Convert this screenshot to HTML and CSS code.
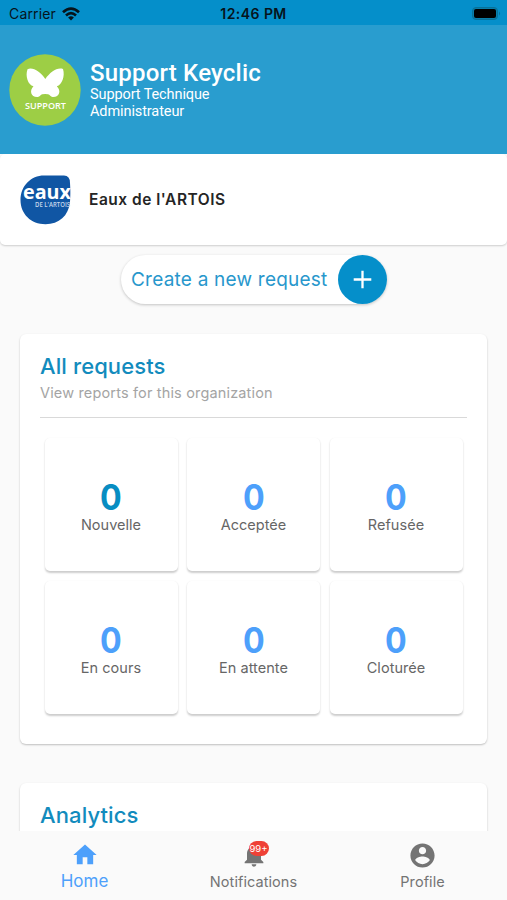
FILE: index.html
```html
<!DOCTYPE html>
<html lang="en">
<head>
<meta charset="utf-8">
<title>Keyclic</title>
<link rel="stylesheet" href="styles.css">
</head>
<body>
<div class="app">
  <div class="status">
    <div class="carrier"><span>Carrier</span>
      <svg width="18" height="14" viewBox="0 0 18 14"><g fill="none" stroke="#06141c" stroke-width="2.7"><path d="M1 5.2Q9-2 17 5.2"/><path d="M4 8.400Q9 4 14 8.400"/></g><path d="M6.100 10.400Q9 8 11.900 10.400L9 13.400Z" fill="#06141c"/></svg>
    </div>
    <span class="time">12:46 PM</span>
    <svg class="battery" width="31" height="15" viewBox="0 0 31 15"><rect x="1.500" y="1.500" width="25" height="12" rx="3.500" fill="#087eaa" stroke="#087199"/><rect x="3" y="3" width="22" height="9" rx="2" fill="#000"/><path d="M28 5.500q2.200 2 0 4z" fill="#087199"/></svg>
  </div>
  <header class="profile">
    <svg class="avatar" width="72" height="72" viewBox="0 0 72 72"><circle cx="36" cy="36" r="35.700" fill="#9dce45"/><path d="M18.500 15.200C24 12.800 31.500 18 36.300 25C41 18 48.500 12.800 54 15C56.200 22 53 31 47.800 32.200C52.500 36.500 50.500 43.500 43.500 43C41.500 42.800 41 40.700 39 40.300Q36 39.800 33.300 40.300C31.300 40.700 31 42.800 28.800 43C22 43.500 20 36.500 24.500 32.200C19 31 16 22 18.500 15.200Z" fill="#fff"/><text x="16" y="54.500" textLength="41" lengthAdjust="spacingAndGlyphs" class="avatar-text">SUPPORT</text></svg>
    <div>
      <h1>Support Keyclic</h1>
      <p class="team">Support Technique</p>
      <p class="role">Administrateur</p>
    </div>
  </header>
  <main>
    <section class="org">
      <svg width="52" height="50" viewBox="0 0 52 50"><path d="M24 .5H44Q50 .5 50 8C50.500 16 50.500 20 50 27C48.500 41 39 49.200 25.500 49.200C11 49.200 .5 39 .5 25C.5 11 11 .5 24 .5Z" fill="#1056a4"/><text x="3" y="24.200" textLength="48" lengthAdjust="spacingAndGlyphs" class="logo-main">eaux</text><text x="15" y="31.500" textLength="35" lengthAdjust="spacingAndGlyphs" class="logo-sub">DE L'ARTOIS</text></svg>
      <span class="org-name">Eaux de l'ARTOIS</span>
    </section>
    <div class="create">
      <span>Create a new request</span>
      <svg width="49" height="49" viewBox="0 0 49 49"><circle cx="24.500" cy="24.500" r="24.500" fill="#058fca"/><path d="M24.500 15.700V33.300M15.700 24.500H33.300" stroke="#fff" stroke-width="2.300"/></svg>
    </div>
    <section class="card">
      <h2>All requests</h2>
      <p class="sub">View reports for this organization</p>
      <hr>
      <div class="tiles">
        <div class="tile first"><b>0</b><span>Nouvelle</span></div>
        <div class="tile"><b>0</b><span>Acceptée</span></div>
        <div class="tile"><b>0</b><span>Refusée</span></div>
        <div class="tile"><b>0</b><span>En cours</span></div>
        <div class="tile"><b>0</b><span>En attente</span></div>
        <div class="tile"><b>0</b><span>Cloturée</span></div>
      </div>
    </section>
    <section class="card analytics"><h2>Analytics</h2></section>
  </main>
  <nav>
    <div class="tab active"><svg width="28" height="28" viewBox="0 0 24 24" fill="currentColor"><path d="M10 20v-6h4v6h5v-8h3L12 3 2 12h3v8z"/></svg><span>Home</span></div>
    <div class="tab"><div class="bell"><svg width="28" height="28" viewBox="0 0 24 24" fill="currentColor"><path d="M12 22c1.100 0 2-.9 2-2h-4c0 1.100.9 2 2 2zm6-6v-5c0-3.070-1.640-5.640-4.500-6.320V4c0-.83-.67-1.500-1.500-1.500s-1.500.67-1.500 1.500v.68C7.630 5.360 6 7.920 6 11v5l-2 2v1h16v-1l-2-2z"/></svg><i class="badge">99+</i></div><span>Notifications</span></div>
    <div class="tab"><svg width="29" height="29" viewBox="0 0 24 24" fill="currentColor"><path d="M12 2C6.480 2 2 6.480 2 12s4.480 10 10 10 10-4.480 10-10S17.520 2 12 2zm0 3c1.660 0 3 1.340 3 3s-1.340 3-3 3-3-1.340-3-3 1.340-3 3-3zm0 14.200c-2.500 0-4.710-1.280-6-3.220.03-1.990 4-3.080 6-3.080 1.990 0 5.970 1.090 6 3.080-1.290 1.940-3.500 3.220-6 3.220z"/></svg><span>Profile</span></div>
  </nav>
</div>
</body>
</html>
```
FILE: styles.css
```css
* { box-sizing: border-box; margin: 0; padding: 0; }
body { font-family: Inter, sans-serif; background: #fafafa; }
svg { display: block; flex: none; }
.app { height: 900px; display: flex; flex-direction: column; overflow: hidden; }
.status { flex: none; height: 25px; background: #058fca; color: #06141c; display: grid; grid-template-columns: 1fr auto 1fr; align-items: center; padding: 2px 5px 0 9px; font-size: 14px; line-height: 20px; }
.carrier { display: flex; gap: 6px; letter-spacing: .15px; }
.carrier svg { margin-top: 3px; }
.time { font-weight: 600; letter-spacing: .45px; padding-right: 4px; }
.battery { justify-self: end; }
.profile { flex: none; height: 129px; background: #299dcf; color: #fff; display: flex; align-items: center; gap: 9px; padding: 1px 9px 0; font-family: Roboto, sans-serif; }
.profile h1 { font-size: 24px; font-weight: 500; line-height: 24px; margin-bottom: 2px; letter-spacing: .2px; }
.profile p { font-size: 14.500px; line-height: 17px; letter-spacing: -.1px; }
.profile .team { line-height: 16px; }
.avatar-text { font: 600 9px "Open Sans", sans-serif; fill: #fff; }
main { flex: 1; min-height: 0; overflow: hidden; display: flex; flex-direction: column; }
.org { flex: none; height: 91px; display: flex; align-items: center; gap: 17px; padding-left: 20px; background: #fff; border-radius: 5px; box-shadow: 0 1px 2px rgba(0,0,0,.18); }
.logo-main { font: 700 20px "Open Sans", sans-serif; fill: #fff; }
.logo-sub { font: 600 7px "Open Sans", sans-serif; fill: #c5d7eb; }
.org-name { font-size: 15.500px; font-weight: 600; color: #252525; letter-spacing: .5px; }
.create { flex: none; align-self: center; width: 266px; height: 49px; margin-top: 10px; padding-left: 10.500px; display: flex; align-items: center; justify-content: space-between; background: #fff; color: #2897cc; border-radius: 25px; box-shadow: 0 1px 3px rgba(0,0,0,.22); font-size: 19px; letter-spacing: .22px; white-space: nowrap; }
.card { flex: none; height: 410px; margin: 30px 20px 0; padding: 18px 20px; background: #fff; border-radius: 6px; box-shadow: 0 1px 2px rgba(0,0,0,.24); }
.card h2 { font-size: 22px; font-weight: 500; line-height: 28px; letter-spacing: .1px; color: #128bbd; }
.sub { font-size: 14.500px; line-height: 20px; margin-top: 3px; letter-spacing: .16px; color: #a4a4a4; }
hr { border: 0; height: 1px; background: #d9d9d9; margin-top: 14px; }
.tiles { display: grid; grid-template-columns: repeat(3, 133px); grid-auto-rows: 133px; gap: 9.500px; margin: 20px 0 0 4.500px; }
.tile { background: #fff; border-radius: 5px; box-shadow: 0 1.500px 2px rgba(0,0,0,.2); display: flex; flex-direction: column; align-items: center; padding-top: 39px; color: #666; font-size: 14.500px; letter-spacing: .03px; }
.tile b { font-size: 35px; line-height: 40px; letter-spacing: 0; color: #4da0fb; transform: scaleX(.92); }
.tile span { line-height: 16px; }
.tile.first b { color: #078dc2; }
.analytics { margin-top: 39px; }
nav { flex: none; height: 69px; background: #fafafa; display: grid; grid-template-columns: repeat(3, 1fr); }
.tab { display: flex; flex-direction: column; align-items: center; padding-top: 10px; color: #747474; font-size: 14.500px; letter-spacing: .06px; }
.tab > span { line-height: 20px; margin-top: 2px; }
.active { color: #4da0fb; font-size: 17px; letter-spacing: 0; }
.active > span { margin-top: 2px; }
.bell { position: relative; }
.bell + span { margin-top: 3px; }
.badge { position: absolute; top: 0; left: 9px; width: 20px; height: 15px; border-radius: 8px; background: #ef4136; color: #fff; font: normal 9.500px/15px Inter, sans-serif; letter-spacing: 0; text-align: center; }
```
